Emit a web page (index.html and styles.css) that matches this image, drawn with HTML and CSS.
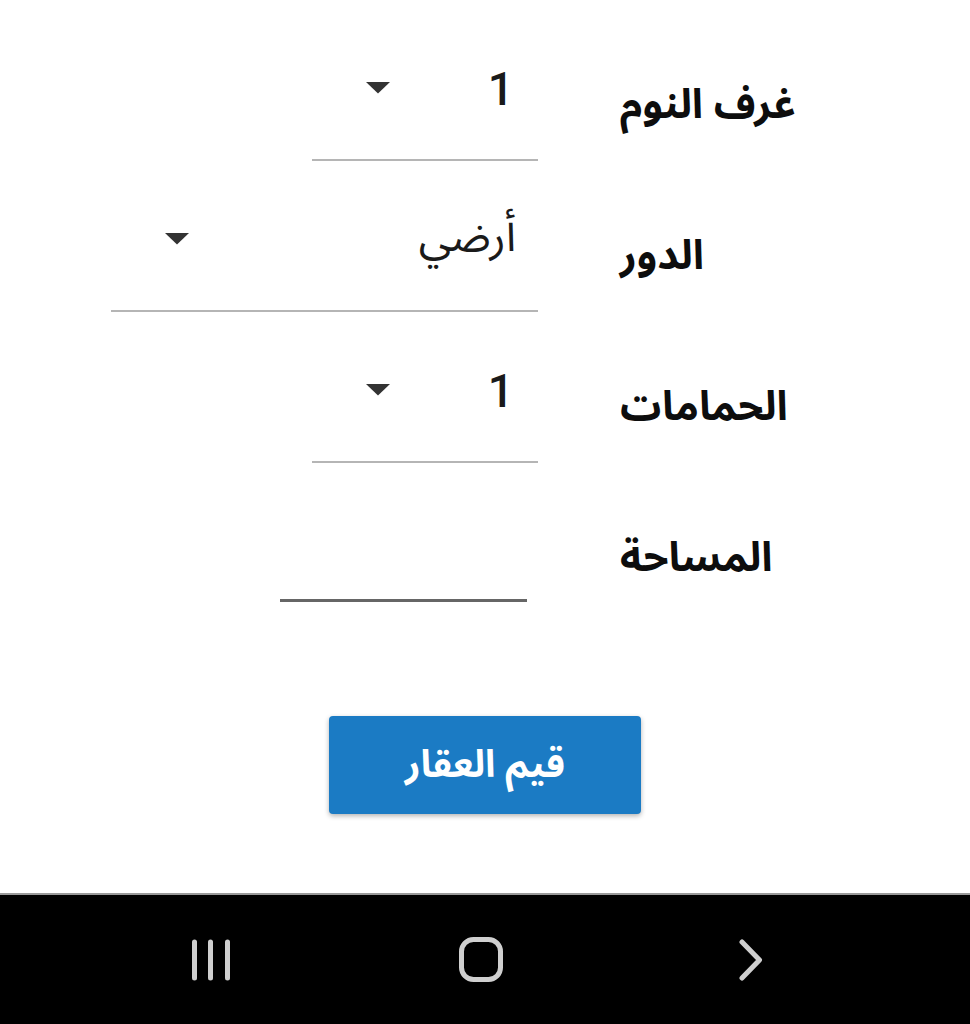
FILE: index.html
```html
<!DOCTYPE html>
<html lang="ar">
<head>
<meta charset="utf-8">
<link rel="stylesheet" href="styles.css">
</head>
<body>
<div class="screen">
  <main class="content">
    <div class="form">
      <div class="row">
        <div class="label">غرف النوم</div>
        <div class="select select-short">
          <span class="value num">1</span>
          <svg class="arrow" viewBox="0 0 26 13"><polygon points="1,1 25,1 13,12.5" /></svg>
        </div>
      </div>
      <div class="row">
        <div class="label">الدور</div>
        <div class="select select-wide">
          <span class="value ar">أرضي</span>
          <svg class="arrow" viewBox="0 0 26 13"><polygon points="1,1 25,1 13,12.5" /></svg>
        </div>
      </div>
      <div class="row">
        <div class="label">الحمامات</div>
        <div class="select select-short">
          <span class="value num">1</span>
          <svg class="arrow" viewBox="0 0 26 13"><polygon points="1,1 25,1 13,12.5" /></svg>
        </div>
      </div>
      <div class="row">
        <div class="label">المساحة</div>
        <div class="input"></div>
      </div>
    </div>
    <div class="actions">
      <button class="btn">قيم العقار</button>
    </div>
  </main>
  <nav class="navbar">
    <div class="nav-cell">
      <svg class="nav-icon" width="42" height="42" viewBox="0 0 42 42">
        <line x1="4.5" y1="3" x2="4.5" y2="39" />
        <line x1="20.5" y1="3" x2="20.5" y2="39" />
        <line x1="37.5" y1="3" x2="37.5" y2="39" />
      </svg>
    </div>
    <div class="nav-cell">
      <svg class="nav-icon" width="44" height="45" viewBox="0 0 44 45">
        <rect x="2.5" y="2.5" width="39" height="40" rx="12" ry="12" />
      </svg>
    </div>
    <div class="nav-cell">
      <svg class="nav-icon" width="24" height="42" viewBox="0 0 24 42">
        <polyline points="3,3 20.5,21 3,39" />
      </svg>
    </div>
  </nav>
</div>
</body>
</html>
```

FILE: styles.css
```css
* { box-sizing: border-box; }

html, body {
  margin: 0;
  padding: 0;
  background: #ffffff;
}

body {
  width: 970px;
  height: 1024px;
  overflow: hidden;
  font-family: "Noto Sans Arabic", "Noto Naskh Arabic", "DejaVu Sans", sans-serif;
  color: #111;
}

.screen {
  display: flex;
  flex-direction: column;
  height: 1024px;
}

.content {
  flex: 1;
  padding-top: 59px;
}

.form {
  display: flex;
  flex-direction: column;
}

.row {
  direction: rtl;
  display: flex;
  align-items: flex-start;
  height: 151px;
  padding-right: 150px;
  gap: 82px;
}

.label {
  width: 200px;
  flex: none;
  text-align: left;
  font-size: 41px;
  font-weight: bold;
  line-height: 60px;
  padding-top: 16px;
  color: #0d0d0d;
}

.select {
  direction: rtl;
  display: flex;
  justify-content: space-between;
  align-items: flex-start;
  height: 102px;
  padding: 0 22px 0 53px;
  border-bottom: 2px solid #b5b5b5;
}

.select-short { width: 226px; }
.select-wide { width: 427px; }

.value {
  line-height: 60px;
  color: #1a1a1a;
}

.value.num {
  font-family: Roboto, "Noto Sans", sans-serif;
  font-size: 46px;
  font-weight: 500;
  padding-right: 2px;
}

.value.ar {
  font-size: 44px;
  margin-top: -3px;
}

.arrow {
  width: 26px;
  height: 13px;
  margin-top: 22px;
  fill: #333;
}

.input {
  width: 247px;
  height: 90px;
  margin-right: 11px;
  border-bottom: 3px solid #666;
}

.actions {
  display: flex;
  justify-content: center;
  padding-top: 53px;
}

.btn {
  width: 312px;
  height: 98px;
  border: none;
  border-radius: 4px;
  background: #1b7bc4;
  color: #ffffff;
  font-family: "Noto Sans Arabic", "Noto Naskh Arabic", "DejaVu Sans", sans-serif;
  font-size: 38px;
  font-weight: bold;
  box-shadow: 0 2px 5px rgba(0, 0, 0, 0.3);
  direction: rtl;
}

.navbar {
  height: 131px;
  flex: none;
  background: #000;
  border-top: 2px solid #9a9a9a;
  display: grid;
  grid-template-columns: 270px 270px 270px;
  justify-content: center;
  align-items: center;
  padding-right: 8px;
}

.nav-cell {
  display: flex;
  justify-content: center;
  align-items: center;
}

.nav-icon {
  fill: none;
  stroke: #cfcfcf;
  stroke-width: 5;
  stroke-linecap: round;
  stroke-linejoin: round;
}
```
